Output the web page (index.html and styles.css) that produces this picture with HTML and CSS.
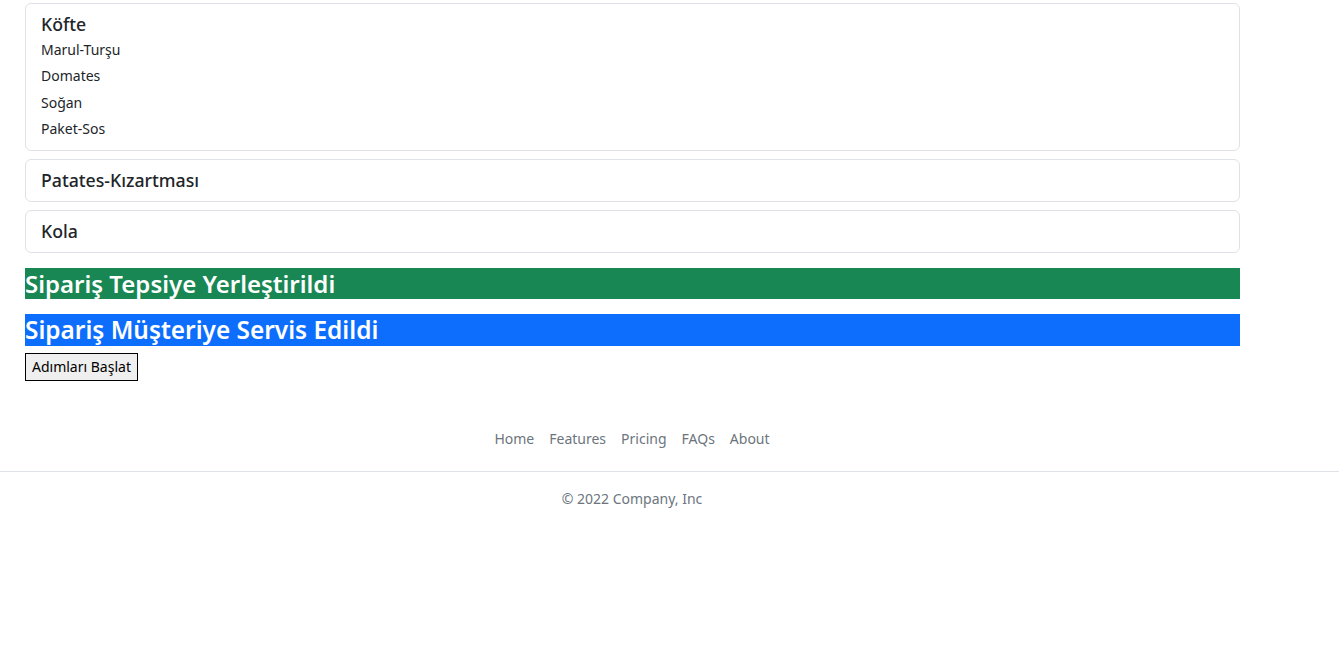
FILE: index.html
```html
<!DOCTYPE html>
<html lang="tr">
<head>
<meta charset="utf-8">
<title>Sipariş</title>
<link rel="stylesheet" href="styles.css">
</head>
<body>
<main class="main">
  <div class="card">
    <h5 class="card-title">Köfte</h5>
    <ul class="items">
      <li>Marul-Turşu</li>
      <li>Domates</li>
      <li>Soğan</li>
      <li>Paket-Sos</li>
    </ul>
  </div>
  <div class="card">
    <h5 class="card-title">Patates-Kızartması</h5>
  </div>
  <div class="card">
    <h5 class="card-title">Kola</h5>
  </div>
  <h4 class="status status-green">Sipariş Tepsiye Yerleştirildi</h4>
  <h4 class="status status-blue">Sipariş Müşteriye Servis Edildi</h4>
  <button class="start-btn">Adımları Başlat</button>
</main>
<footer class="footer">
  <nav class="footer-nav">
    <a href="#">Home</a>
    <a href="#">Features</a>
    <a href="#">Pricing</a>
    <a href="#">FAQs</a>
    <a href="#">About</a>
  </nav>
  <div class="footer-line"></div>
  <p class="copy">© 2022 Company, Inc</p>
</footer>
</body>
</html>
```
FILE: styles.css
```css
* { box-sizing: border-box; }
body {
  margin: 0;
  font-family: "Noto Sans", "Open Sans", sans-serif;
  color: #212529;
  background: #fff;
}
.main {
  width: 1215px;
  margin-left: 25px;
  padding-top: 3px;
  display: flex;
  flex-direction: column;
  align-items: stretch;
}
.card {
  border: 1px solid #dee2e6;
  border-radius: 6px;
  padding: 8px 15px;
  margin-bottom: 8px;
}
.card-title {
  margin: 0;
  font-size: 17.7px;
  font-weight: 500;
  line-height: 25px;
}
.items {
  list-style: none;
  margin: 0;
  padding: 0;
}
.items li {
  font-size: 14px;
  line-height: 26.3px;
}
.status {
  margin: 7px 0 8px;
  color: #fff;
  font-size: 24px;
  font-weight: 600;
  line-height: 31px;
  height: 31px;
  overflow: hidden;
}
.status + .status { margin-top: 7px; }
.status-green { background: #198754; }
.status-blue { background: #0d6efd; height: 32px; line-height: 32px; margin-bottom: 7px; font-size: 24.4px; }
.start-btn {
  align-self: flex-start;
  font-family: inherit;
  font-size: 14px;
  line-height: 20px;
  padding: 3px 6px;
  border: 1px solid #000;
  border-radius: 0;
  background: #efefef;
  color: #000;
}
.footer {
  margin-top: 46px;
}
.footer-nav {
  width: 1264px;
  display: flex;
  justify-content: center;
}
.footer-nav a {
  color: #6c757d;
  text-decoration: none;
  font-size: 14px;
  line-height: 24px;
  padding: 0 7.5px;
}
.footer-line {
  margin-top: 20px;
  border-top: 1px solid #dee2e6;
}
.copy {
  width: 1264px;
  text-align: center;
  margin: 15px 0 0;
  color: #6c757d;
  font-size: 14px;
  line-height: 24px;
}
```
